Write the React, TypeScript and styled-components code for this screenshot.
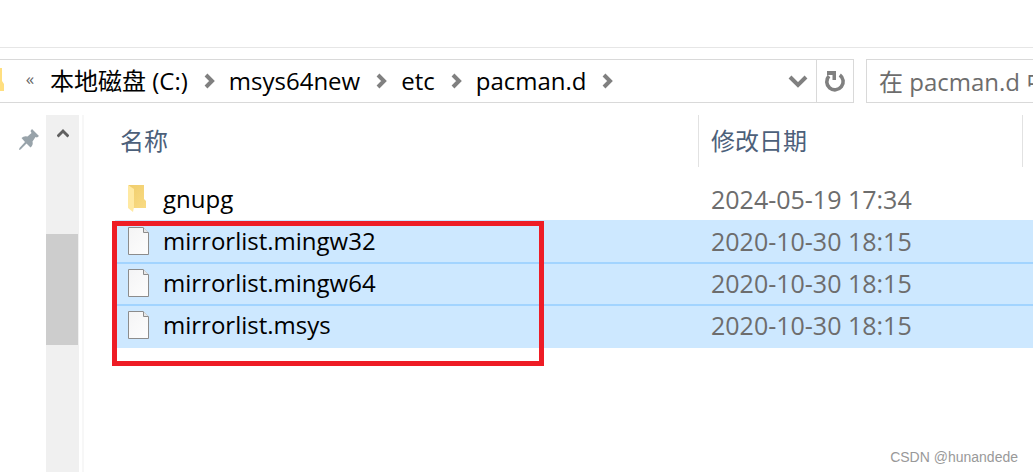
import React from "react";
import styled, { createGlobalStyle } from "styled-components";

const GlobalStyle = createGlobalStyle`
  * { box-sizing: border-box; }
  body {
    margin: 0;
    background: #fff;
    color: #000;
    font: 24px/32px "Open Sans", "Noto Sans CJK SC", sans-serif;
    overflow: hidden;
  }
  button, input { font: inherit; color: inherit; border: 0; padding: 0; background: none; }
  svg { display: block; flex: none; }
`;

const Window = styled.div`
  position: relative;
  display: flex;
  flex-direction: column;
  min-height: 100vh;
  overflow: hidden;
`;

const Ribbon = styled.div`
  height: 48px;
  border-bottom: 1px solid #e6e6e6;
`;

const Toolbar = styled.div`
  display: flex;
  gap: 12px;
  padding: 11px 0 12px;
`;

const AddressBar = styled.nav`
  flex: 1;
  display: flex;
  align-items: stretch;
  height: 44px;
  border: 1px solid #d9d9d9;
  border-left: 0;
`;

const FolderEdge = styled.svg`
  width: 5px;
  height: 26px;
  margin-top: 8px;
`;

const Overflow = styled.button`
  width: 45px;
  padding: 0 0 4px 5px;
  font-size: 17px;
  line-height: 36px;
  color: #666;
  display: flex;
  justify-content: center;
  align-items: center;
`;

const Crumbs = styled.ol`
  flex: 1;
  display: flex;
  align-items: center;
  margin: 0;
  padding: 0;
  list-style: none;
`;

const Crumb = styled.li`
  display: flex;
  align-items: center;
  a { color: #000; text-decoration: none; white-space: nowrap; }
  svg { margin: 0 14px 0 16px; }
`;

const BarButton = styled.button<{ $divided?: boolean }>`
  display: flex;
  align-items: center;
  justify-content: center;
  width: 37px;
  border-left: ${(p) => (p.$divided ? "1px solid #d9d9d9" : "0")};
`;

const SearchBox = styled.input`
  width: 167px;
  height: 44px;
  border: 1px solid #d9d9d9;
  border-right: 0;
  padding-left: 12px;
  border-radius: 0;
  outline: 0;
  &::placeholder { color: #6d6d6d; opacity: 1; }
`;

const Body = styled.div`
  flex: 1;
  display: flex;
`;

const NavPane = styled.aside`
  width: 46px;
  padding: 14px 0 0 18px;
`;

const ScrollBar = styled.div`
  width: 33px;
  background: #f0f0f0;
`;

const ScrollUp = styled.button`
  display: flex;
  justify-content: center;
  align-items: flex-start;
  width: 33px;
  height: 119px;
  padding-top: 13px;
`;

const Thumb = styled.div`
  width: 32px;
  height: 111px;
  background: #cdcdcd;
`;

const Content = styled.main`
  flex: 1;
  margin-left: 3px;
  padding-left: 31px;
  border-left: 2px solid #f7f7f7;
`;

const FileTable = styled.table`
  width: 100%;
  table-layout: fixed;
  border-collapse: separate;
  border-spacing: 0;
`;

const HeadCell = styled.th<{ $width?: number }>`
  width: ${(p) => (p.$width ? `${p.$width}px` : "auto")};
  height: 52px;
  padding: 0 0 0 5px;
  border-right: 1px solid #e2e2e2;
  text-align: left;
  font-weight: 400;
  color: #4c607a;
  & + & { padding-left: 12px; }
  &:last-child { border-right: 0; padding: 0; }
`;

const SpacerCell = styled.td`
  height: 11px;
  padding: 0;
`;

const Row = styled.tr<{ $selected?: boolean }>`
  td {
    height: 42px;
    padding: 0 0 2px 13px;
    border-top: 2px solid ${(p) => (p.$selected ? "#cde8ff" : "transparent")};
    background: ${(p) => (p.$selected ? "#cde8ff" : "transparent")};
    color: #6d6d6d;
    white-space: nowrap;
  }
  td + td { padding-left: 12px; font-size: 25px; }
  &[aria-selected="true"] + &[aria-selected="true"] td { border-top-color: #a2d4ff; }
  &:last-child td { height: 44px; border-bottom: 2px solid #cde8ff; }
`;

const FileName = styled.div`
  display: flex;
  align-items: center;
  gap: 14px;
  color: #000;
`;

const Highlight = styled.div`
  position: absolute;
  left: 112px;
  top: 221px;
  width: 432px;
  height: 145px;
  border: 5px solid #ee1c25;
  pointer-events: none;
`;

const Watermark = styled.div`
  position: absolute;
  right: 15px;
  bottom: 5px;
  font: 14px/20px "Liberation Sans", sans-serif;
  color: #999;
`;

const Chevron = () => (
  <svg width="11" height="16" viewBox="0 0 11 16" fill="none" stroke="#808080" strokeWidth="4" aria-hidden="true">
    <path d="M2 2 L8 8 L2 14" />
  </svg>
);

const FolderIcon = () => (
  <svg width="21" height="28" viewBox="0 0 21 28" aria-hidden="true">
    <defs>
      <linearGradient id="folder" x1="0" y1="0" x2="1" y2="1">
        <stop offset="0" stopColor="#f0cd6c" />
        <stop offset="1" stopColor="#f9db84" />
      </linearGradient>
    </defs>
    <path d="M0 0H16V14L18 16V23H4V4Z" fill="url(#folder)" />
    <path d="M0 0L6 4V22L5 27L0 23Z" fill="#ffe9a2" />
  </svg>
);

const FileIcon = () => (
  <svg width="21" height="28" viewBox="0 0 21 28" aria-hidden="true">
    <defs>
      <linearGradient id="paper" x1="0" y1="0" x2="1" y2="1">
        <stop offset="0" stopColor="#f4f4f5" />
        <stop offset="1" stopColor="#fdfdfd" />
      </linearGradient>
    </defs>
    <path d="M.5 .5H15L20.500 6V27.500H.5Z" fill="url(#paper)" stroke="#8c8c8c" />
    <path d="M15.500 .5V5.500H20.500" fill="#e6e6e6" stroke="#8c8c8c" />
  </svg>
);

const files = [
  { name: "gnupg", date: "2024-05-19 17:34", folder: true, selected: false },
  { name: "mirrorlist.mingw32", date: "2020-10-30 18:15", folder: false, selected: true },
  { name: "mirrorlist.mingw64", date: "2020-10-30 18:15", folder: false, selected: true },
  { name: "mirrorlist.msys", date: "2020-10-30 18:15", folder: false, selected: true },
];

const crumbs = ["本地磁盘 (C:)", "msys64new", "etc", "pacman.d"];

export default function App() {
  return (
    <>
      <GlobalStyle />
      <Window>
        <Ribbon />
        <Toolbar>
          <AddressBar>
            <FolderEdge viewBox="0 0 5 26" aria-hidden="true">
              <path d="M0 0H2V13L4 16V23H0Z" fill="#ffdf80" />
            </FolderEdge>
            <Overflow>«</Overflow>
            <Crumbs>
              {crumbs.map((c) => (
                <Crumb key={c}><a href="#open">{c}</a><Chevron /></Crumb>
              ))}
            </Crumbs>
            <BarButton aria-label="历史记录">
              <svg width="20" height="14" viewBox="0 0 20 14" fill="none" stroke="#808080" strokeWidth="4">
                <path d="M2 3L10 11L18 3" />
              </svg>
            </BarButton>
            <BarButton $divided aria-label="刷新">
              <svg width="22" height="24" viewBox="0 0 22 24">
                <path d="M15.800 6A8.200 8.200 0 1 1 5 7" fill="none" stroke="#808080" strokeWidth="3.600" />
                <path d="M3 2H12V11H8.500V6H3Z" fill="#808080" />
              </svg>
            </BarButton>
          </AddressBar>
          <SearchBox type="text" aria-label="搜索" placeholder="在 pacman.d 中搜索" />
        </Toolbar>
        <Body>
          <NavPane>
            <svg width="22" height="22" viewBox="0 0 22 22" fill="#98a3aa" aria-hidden="true">
              <path d="M14 0L21 7L19 8.500L17.500 8L14.500 12.500Q15.500 16 12.500 18.500L8.500 14.500L2.500 20.500L1 21L1.500 19L7 13L3.500 9Q6 6.500 9.500 7.500L13.500 4L12.500 2Z" />
            </svg>
          </NavPane>
          <ScrollBar>
            <ScrollUp aria-label="向上滚动">
              <svg width="12" height="10" viewBox="0 0 12 10" fill="none" stroke="#606060" strokeWidth="3">
                <path d="M.5 8.500L6 3L11.500 8.500" />
              </svg>
            </ScrollUp>
            <Thumb />
          </ScrollBar>
          <Content>
            <FileTable>
              <thead>
                <tr>
                  <HeadCell scope="col">名称</HeadCell>
                  <HeadCell scope="col" $width={324}>修改日期</HeadCell>
                  <HeadCell as="td" $width={10} />
                </tr>
              </thead>
              <tbody>
                <tr><SpacerCell colSpan={3} /></tr>
                {files.map((f) => (
                  <Row key={f.name} aria-selected={f.selected} $selected={f.selected}>
                    <td>
                      <FileName>
                        {f.folder ? <FolderIcon /> : <FileIcon />}
                        {f.name}
                      </FileName>
                    </td>
                    <td>{f.date}</td>
                    <td />
                  </Row>
                ))}
              </tbody>
            </FileTable>
          </Content>
        </Body>
        <Highlight />
        <Watermark>CSDN @hunandede</Watermark>
      </Window>
    </>
  );
}
